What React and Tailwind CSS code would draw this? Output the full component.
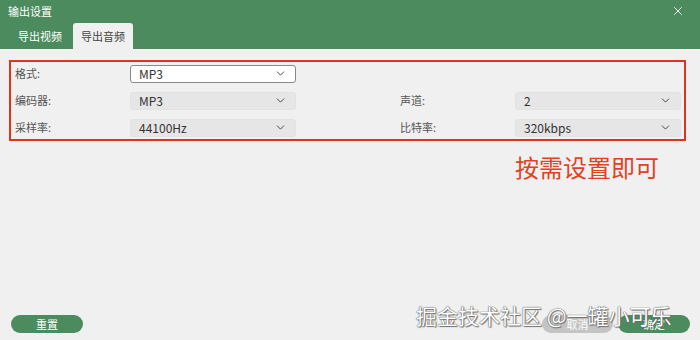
import { ChevronDown, X } from 'lucide-react';

const font = { fontFamily: '"Noto Sans CJK SC", "Noto Sans", sans-serif' };

function Select({ value, active = false }) {
    return (
        <div
            className={
                'flex h-[18px] w-[166px] items-center justify-between rounded-[3px] pl-2 pr-2 text-[12px] text-[#333] ' +
                (active ? 'border border-[#8a8a8a] bg-white' : 'border border-[#e2e2e2] bg-[#e6e6e6]')
            }
        >
            <span className="leading-none">{value}</span>
            <ChevronDown size={13} strokeWidth={1.75} className="text-[#444]" />
        </div>
    );
}

function Field({ label, value, active }) {
    return (
        <div className="flex items-center">
            <span className="w-[115px] text-[11px] text-[#555]">{label}</span>
            <Select value={value} active={active} />
        </div>
    );
}

export default function App() {
    return (
        <div className="relative flex h-[340px] w-[700px] flex-col bg-[#f0f0f0]" style={font}>
            {/* Header */}
            <div className="flex h-[49px] flex-col bg-[#4c8b5e]">
                <div className="flex h-[22px] items-center justify-between pl-[8px] pr-[15px]">
                    <span className="text-[11px] text-white">输出设置</span>
                    <X size={14} strokeWidth={1.5} className="text-white" />
                </div>
                <div className="flex flex-1 items-end pl-[8px]">
                    <div className="flex h-[26px] w-[64px] items-center justify-center text-[11px] text-white">导出视频</div>
                    <div className="ml-[1px] flex h-[26px] w-[60px] items-center justify-center rounded-t-[3px] bg-[#f0f0f0] text-[11px] text-[#444]">
                        导出音频
                    </div>
                </div>
            </div>

            {/* Settings */}
            <div className="ml-[9px] mt-[11px] flex h-[81px] w-[677px] flex-col justify-center gap-[9px] border-2 border-[#e3321c] pl-[4px]">
                <Field label="格式:" value="MP3" active />
                <div className="flex">
                    <Field label="编码器:" value="MP3" />
                    <div className="ml-[104px]">
                        <Field label="声道:" value="2" />
                    </div>
                </div>
                <div className="flex">
                    <Field label="采样率:" value="44100Hz" />
                    <div className="ml-[104px]">
                        <Field label="比特率:" value="320kbps" />
                    </div>
                </div>
            </div>

            <div className="ml-[515px] mt-[10px] text-[24px] leading-[32px] text-[#e3411f]">按需设置即可</div>

            {/* Footer */}
            <div className="mt-auto flex items-center justify-between pb-[7px] pl-[11px] pr-[10px]">
                <button className="h-[18px] w-[72px] rounded-full bg-[#4c8b5e] text-[11px] text-white">重置</button>
                <div className="flex gap-[5px]">
                    <button className="h-[18px] w-[71px] rounded-full bg-[#c4c4c4] text-[11px] text-white">取消</button>
                    <button className="h-[18px] w-[72px] rounded-full bg-[#4c8b5e] text-[11px] text-white">确定</button>
                </div>
            </div>

            {/* Watermark */}
            <div
                className="absolute left-[416px] top-[301px] text-[21px] leading-[28px] text-white"
                style={{ textShadow: '0 0 1px #555, 0 0 1px #555, 1px 1px 1px #777' }}
            >
                掘金技术社区 @一罐小可乐
            </div>
        </div>
    );
}
